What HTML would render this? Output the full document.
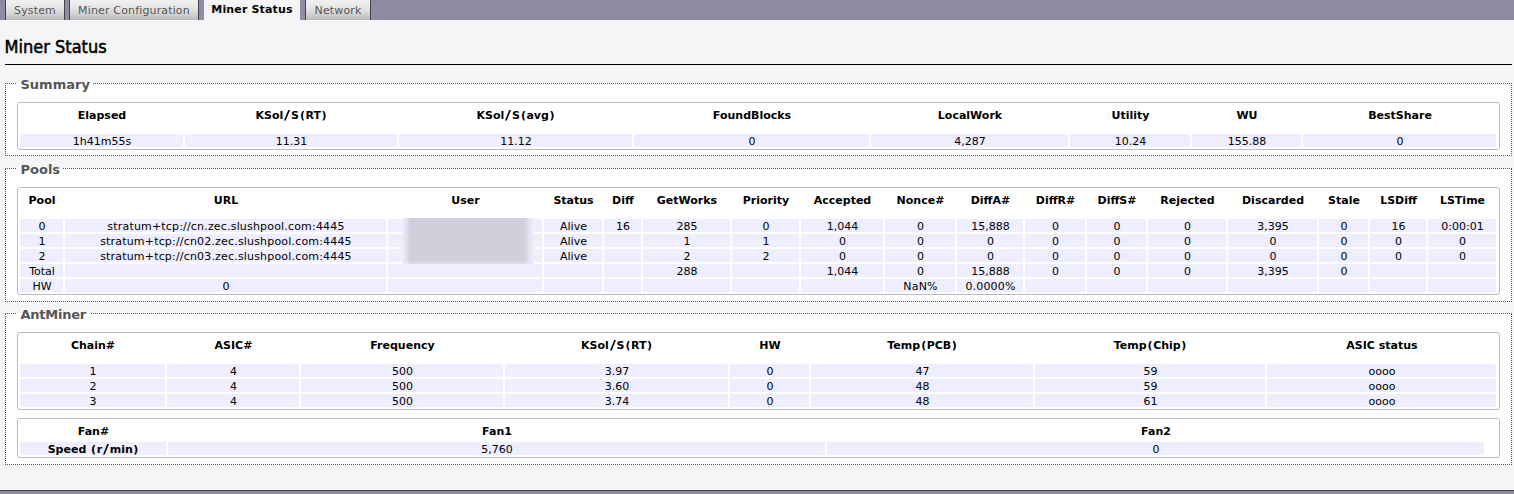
<!DOCTYPE html>
<html>
<head>
<meta charset="utf-8">
<title>Miner Status</title>
<style>
html,body{margin:0;padding:0;}
body{width:1514px;height:494px;overflow:hidden;background:#f5f5f5;font-family:"DejaVu Sans","Liberation Sans",sans-serif;font-size:11px;color:#000;position:relative;}
#tabbar{position:absolute;left:0;top:0;width:1514px;height:20px;background:#908ba2;}
.tab{position:absolute;top:0;height:20px;box-sizing:border-box;border-left:1px solid #444;border-right:1px solid #444;background:linear-gradient(#f1f1f1,#e9e9e9 30%,#dadada 60%,#b9b9b9);color:#555;font-size:11px;line-height:22px;letter-spacing:0.15px;text-align:center;white-space:nowrap;}
.tab.active{background:#f5f5f5;border:0;color:#000;font-weight:bold;line-height:20px;}
h2{position:absolute;left:4.5px;top:35px;-webkit-text-stroke:0.5px #000;margin:0;font-family:"DejaVu Sans Condensed","Liberation Sans",sans-serif;font-weight:normal;font-size:18px;line-height:24px;white-space:nowrap;}
#hr{position:absolute;left:5px;top:64px;width:1507px;height:1px;background:#000;}
.fs{position:absolute;left:5px;width:1507px;box-sizing:border-box;border:1px dotted #555;background:#fff;}
.lg{position:absolute;left:10px;top:-7px;padding:0 3px 0 4.5px;background:linear-gradient(#f5f5f5 6px,#fff 6px);font-size:13px;line-height:16px;font-weight:bold;color:#555;white-space:nowrap;}
table{position:absolute;left:11px;width:1483px;box-sizing:border-box;border:1px solid #bbb;border-radius:3px;background:#fff;border-collapse:separate;border-spacing:0;table-layout:fixed;font-size:11px;padding:0 2px 1px 1px;}
th{font-weight:bold;text-align:center;padding:0 0 5px 1px;border:1px solid #fff;vertical-align:middle;line-height:13px;white-space:nowrap;}
td{background:#eeeeff;background-clip:padding-box;text-align:center;padding:2px 0 0 1px;height:11px;line-height:11px;border:1px solid #fff;white-space:nowrap;}
td.b{font-weight:bold;}
.sl{display:inline-block;transform:scale(1.5,1.06);transform-origin:50% 85%;margin:0 1.8px;}
.pl{margin:0 0.5px 0 1px;}
.pr{margin:0 1px 0 0.5px;}
table.fan th{padding:3px 0 0 1px;}
td.u{letter-spacing:0.18px;}
td.e{background:#fff;}
#bw{position:absolute;left:402px;top:218px;width:132px;height:46px;overflow:hidden;background:linear-gradient(#f0f0fb,#ececfb 4px,#ececfb);}
#blur{position:absolute;left:5px;top:-5px;width:121px;height:51px;background:#cfcfdc;filter:blur(2.5px);}
#foot{position:absolute;left:0;top:490px;width:1514px;height:4px;background:#908ba2;border-top:1px solid #444;box-sizing:border-box;}
</style>
</head>
<body>
<div id="tabbar">
<div class="tab" style="left:5px;width:60px;">System</div>
<div class="tab" style="left:69px;width:130px;">Miner Configuration</div>
<div class="tab active" style="left:204px;width:96px;">Miner Status</div>
<div class="tab" style="left:305px;width:66px;">Network</div>
</div>
<h2>Miner Status</h2>
<div id="hr"></div>

<div class="fs" style="top:83px;height:73px;">
<div class="lg">Summary</div>
<table  style="top:18px;height:48px;"><colgroup><col style="width:165px"><col style="width:214px"><col style="width:235px"><col style="width:237px"><col style="width:199px"><col style="width:122px"><col style="width:111px"><col style="width:195px"></colgroup>
<tr class="h" style="height:30px"><th>Elapsed</th><th>KSol<span class="sl">/</span>S<span class="pl">(</span>RT<span class="pr">)</span></th><th>KSol<span class="sl">/</span>S<span class="pl">(</span>avg<span class="pr">)</span></th><th>FoundBlocks</th><th>LocalWork</th><th>Utility</th><th>WU</th><th>BestShare</th></tr>
<tr><td>1h41m55s</td><td>11.31</td><td>11.12</td><td>0</td><td>4,287</td><td>10.24</td><td>155.88</td><td>0</td></tr>
</table>
</div>

<div class="fs" style="top:168px;height:134px;">
<div class="lg">Pools</div>
<table  style="top:18px;height:108px;"><colgroup><col style="width:45px"><col style="width:323px"><col style="width:156px"><col style="width:60px"><col style="width:39px"><col style="width:89px"><col style="width:69px"><col style="width:84px"><col style="width:72px"><col style="width:68px"><col style="width:62px"><col style="width:61px"><col style="width:80px"><col style="width:91px"><col style="width:51px"><col style="width:58px"><col style="width:70px"></colgroup>
<tr class="h" style="height:30px"><th>Pool</th><th>URL</th><th>User</th><th>Status</th><th>Diff</th><th>GetWorks</th><th>Priority</th><th>Accepted</th><th>Nonce#</th><th>DiffA#</th><th>DiffR#</th><th>DiffS#</th><th>Rejected</th><th>Discarded</th><th>Stale</th><th>LSDiff</th><th>LSTime</th></tr>
<tr><td>0</td><td class="u">stratum+tcp://cn.zec.slushpool.com:4445</td><td></td><td>Alive</td><td>16</td><td>285</td><td>0</td><td>1,044</td><td>0</td><td>15,888</td><td>0</td><td>0</td><td>0</td><td>3,395</td><td>0</td><td>16</td><td>0:00:01</td></tr>
<tr><td>1</td><td class="u">stratum+tcp://cn02.zec.slushpool.com:4445</td><td></td><td>Alive</td><td></td><td>1</td><td>1</td><td>0</td><td>0</td><td>0</td><td>0</td><td>0</td><td>0</td><td>0</td><td>0</td><td>0</td><td>0</td></tr>
<tr><td>2</td><td class="u">stratum+tcp://cn03.zec.slushpool.com:4445</td><td></td><td>Alive</td><td></td><td>2</td><td>2</td><td>0</td><td>0</td><td>0</td><td>0</td><td>0</td><td>0</td><td>0</td><td>0</td><td>0</td><td>0</td></tr>
<tr><td>Total</td><td></td><td></td><td></td><td></td><td>288</td><td></td><td>1,044</td><td>0</td><td>15,888</td><td>0</td><td>0</td><td>0</td><td>3,395</td><td>0</td><td></td><td></td></tr>
<tr><td>HW</td><td>0</td><td></td><td></td><td></td><td></td><td></td><td></td><td class="u">NaN%</td><td class="u">0.0000%</td><td></td><td></td><td></td><td></td><td></td><td></td><td></td></tr>
</table>
</div>

<div class="fs" style="top:313px;height:152px;">
<div class="lg" style="letter-spacing:-0.25px;padding-right:5px;">AntMiner</div>
<table  style="top:18px;height:78px;"><colgroup><col style="width:147px"><col style="width:134px"><col style="width:204px"><col style="width:225px"><col style="width:81px"><col style="width:224px"><col style="width:232px"><col style="width:231px"></colgroup>
<tr class="h" style="height:30px"><th>Chain#</th><th>ASIC#</th><th>Frequency</th><th>KSol<span class="sl">/</span>S<span class="pl">(</span>RT<span class="pr">)</span></th><th>HW</th><th>Temp<span class="pl">(</span>PCB<span class="pr">)</span></th><th>Temp<span class="pl">(</span>Chip<span class="pr">)</span></th><th>ASIC status</th></tr>
<tr><td>1</td><td>4</td><td>500</td><td>3.97</td><td>0</td><td>47</td><td>59</td><td>oooo</td></tr>
<tr><td>2</td><td>4</td><td>500</td><td>3.60</td><td>0</td><td>48</td><td>59</td><td>oooo</td></tr>
<tr><td>3</td><td>4</td><td>500</td><td>3.74</td><td>0</td><td>48</td><td>61</td><td>oooo</td></tr>
</table>
<table class="fan" style="top:104px;height:40px;"><colgroup><col style="width:148px"><col style="width:659px"><col style="width:659px"><col style="width:12px"></colgroup>
<tr class="h" style="height:22px"><th>Fan#</th><th>Fan1</th><th>Fan2</th><th></th></tr>
<tr><td class="b">Speed <span class="pl">(</span>r<span class="sl">/</span>min<span class="pr">)</span></td><td>5,760</td><td>0</td><td class="e"></td></tr>
</table>
</div>

<div id="bw"><div id="blur"></div></div>
<div id="foot"></div>
</body>
</html>
